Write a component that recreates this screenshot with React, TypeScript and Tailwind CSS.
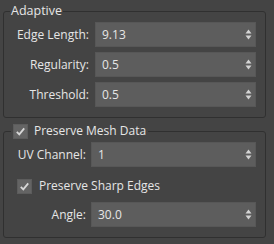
import * as React from "react";

function Spinner() {
  return (
    <svg width="7" height="11" viewBox="0 0 7 11" className="shrink-0">
      <path d="M3.5 0.5 L6.5 4.5 L0.5 4.5 Z" fill="#d4d4d4" />
      <path d="M3.5 10.5 L6.5 6.5 L0.5 6.5 Z" fill="#d4d4d4" />
    </svg>
  );
}

function NumberField({ value }: { value: string }) {
  return (
    <div className="flex-1 h-[25px] flex items-center justify-between pl-[6px] pr-[3px] bg-[#5d5d5d] border border-[#575757]">
      <span>{value}</span>
      <Spinner />
    </div>
  );
}

function CheckBox() {
  return (
    <span className="inline-flex w-[15px] h-[15px] shrink-0 items-center justify-center bg-[#646464] border border-[#5c5c5c]">
      <svg width="11" height="11" viewBox="0 0 11 11">
        <path
          d="M1.8 5.8 L4.3 8.3 L9.2 2.4"
          fill="none"
          stroke="#d8d8d8"
          strokeWidth={1.8}
        />
      </svg>
    </span>
  );
}

function Row({ label, value }: { label: string; value: string }) {
  return (
    <div className="flex items-center gap-[6px]">
      <div className="w-[79px] text-right whitespace-nowrap">{label}</div>
      <NumberField value={value} />
    </div>
  );
}

export default function App() {
  return (
    <div className="w-[274px] h-[244px] bg-[#444444] pl-[3px] pr-[8px] pt-[3px] font-['Open_Sans',sans-serif] text-[12px] text-[#e6e6e6]">
      <fieldset className="border border-[#303030] rounded-[3px] pl-[6px] pr-[9px] pb-[10px]">
        <legend className="px-[1px] leading-[16px] text-[12.5px]">Adaptive</legend>
        <div className="flex flex-col gap-[5px] pt-[3px]">
          <Row label="Edge Length:" value="9.13" />
          <Row label="Regularity:" value="0.5" />
          <Row label="Threshold:" value="0.5" />
        </div>
      </fieldset>

      <fieldset className="mt-[5px] border border-[#303030] rounded-[3px] pl-[7px] pr-[9px] pb-[10px]">
        <legend className="px-[2px] h-[16px] leading-[16px]">
          <div className="flex items-center gap-[6px] h-[16px]">
            <CheckBox />
            <span>Preserve Mesh Data</span>
          </div>
        </legend>
        <div className="flex flex-col pt-[3px]">
          <div className="flex items-center gap-[5px]">
            <div className="w-[75px] text-right whitespace-nowrap">UV Channel:</div>
            <NumberField value="1" />
          </div>
          <div className="mt-[11px] ml-[6px] h-[16px] flex items-center gap-[7px]">
            <CheckBox />
            <span>Preserve Sharp Edges</span>
          </div>
          <div className="mt-[8px] flex items-center gap-[5px]">
            <div className="w-[75px] text-right whitespace-nowrap">Angle:</div>
            <NumberField value="30.0" />
          </div>
        </div>
      </fieldset>
    </div>
  );
}
